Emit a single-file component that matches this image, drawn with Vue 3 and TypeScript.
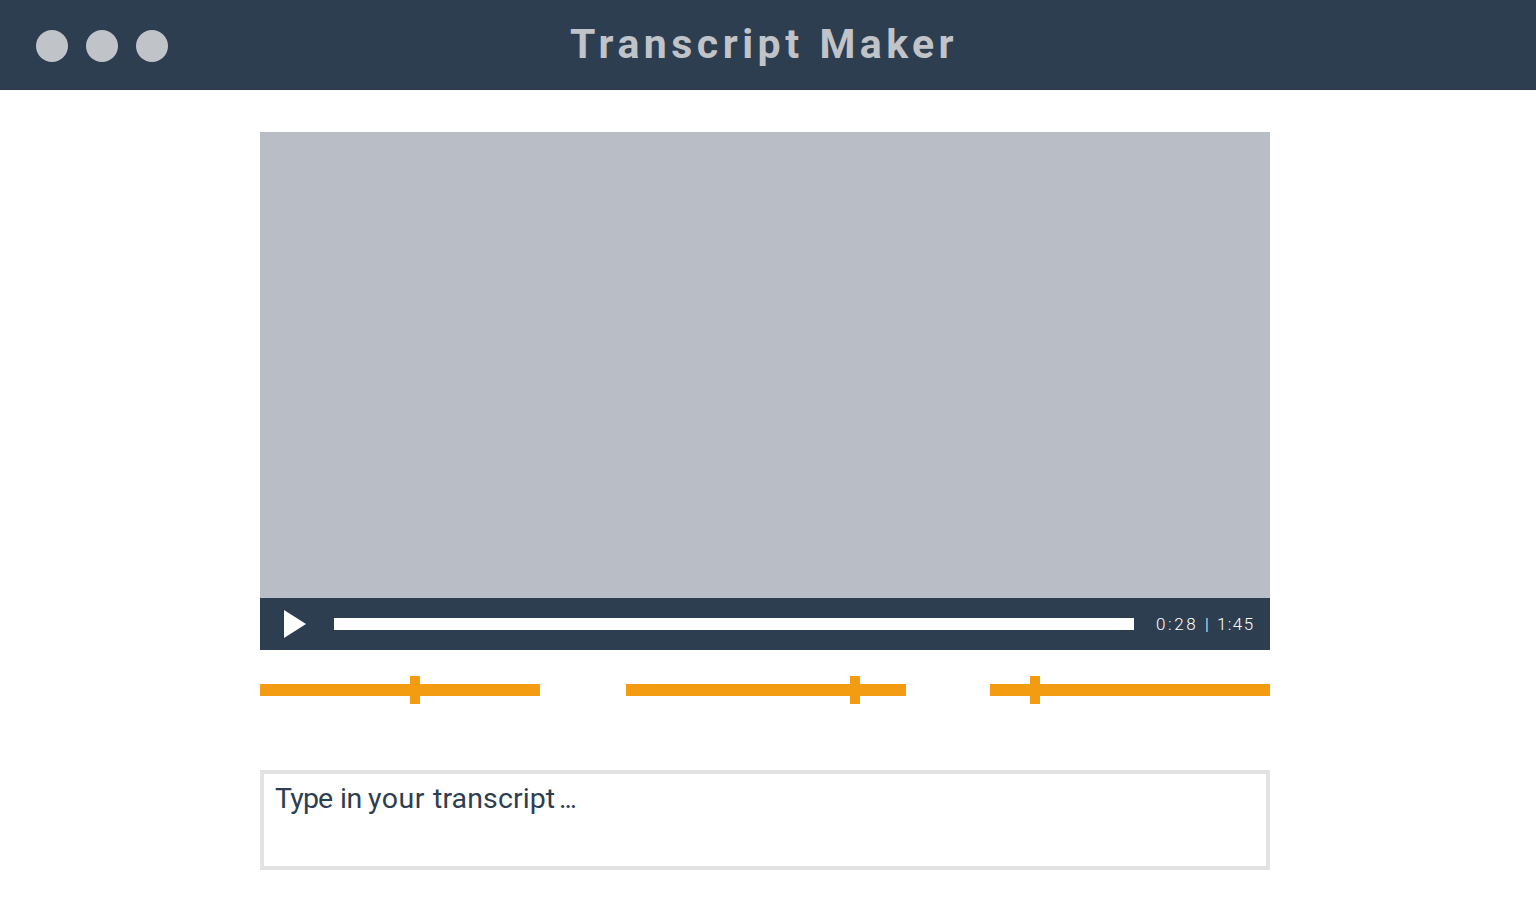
<script setup lang="ts">
import { ref } from 'vue'

interface Slider {
  id: string
  offset: number
}

const sliders: Slider[] = [
  { id: 'first', offset: 150 },
  { id: 'second', offset: 224 },
  { id: 'third', offset: 40 },
]
const words = ref(['Type', 'in', 'your', 'transcript', '...'])
</script>

<template>
  <div class="app">
    <header class="titlebar">
      <div class="dots">
        <span v-for="n in 3" :key="n" class="dot"></span>
      </div>
      <h1 class="title"><span class="lead">Transcript</span><span class="tail">Maker</span></h1>
      <div class="balance"></div>
    </header>
    <main class="content">
      <section class="player">
        <div class="video"></div>
        <div class="controls">
          <svg class="play" viewBox="0 0 22 28" width="22" height="28">
            <path d="M0 0L22 14L0 28Z" fill="#fff" />
          </svg>
          <div class="track"></div>
          <div class="time"><span class="elapsed">0:28</span><span class="bar">|</span><span class="total">1:45</span></div>
        </div>
      </section>
      <section class="sliders">
        <div v-for="s in sliders" :key="s.id" class="slider">
          <div class="thumb" :style="{ marginLeft: s.offset + 'px' }"></div>
        </div>
      </section>
      <div class="transcript">
        <span v-for="(w, i) in words" :key="w" :class="['word', 'word-' + i]">{{ w }}</span>
      </div>
    </main>
  </div>
</template>

<style>
body {
  margin: 0;
  background: #fff;
}
</style>

<style scoped>
.app {
  width: 1536px;
  height: 900px;
  overflow: hidden;
  background: #fff;
  font-family: Roboto, "Noto Sans", sans-serif;
}
.titlebar {
  display: grid;
  grid-template-columns: 570px 1fr 36px;
  height: 90px;
  box-sizing: border-box;
  border-bottom: 1px solid #2f3550;
  background: #2d3e50;
}
.dots {
  display: flex;
  gap: 18px;
  padding: 30px 0 0 36px;
}
.dot {
  width: 32px;
  height: 32px;
  border-radius: 50%;
  background: #c0c3c8;
}
.title {
  display: flex;
  margin: 0;
  padding-top: 20px;
  color: #c0c3c8;
  font-size: 41px;
  line-height: 48px;
  font-weight: 700;
  white-space: nowrap;
}
.lead {
  width: 249.5px;
  letter-spacing: 4.5px;
}
.tail {
  letter-spacing: 4.4px;
}
.content {
  width: 1010px;
  margin: 42px 0 0 260px;
}
.video {
  height: 466px;
  background: #b9bec6;
}
.controls {
  display: flex;
  align-items: center;
  height: 52px;
  box-sizing: border-box;
  padding-left: 24px;
  background: #2d3e50;
}
.track {
  width: 800px;
  height: 12px;
  margin-left: 28px;
  background: #fff;
}
.time {
  display: flex;
  margin-left: 22px;
  color: #fff;
  font-size: 17px;
  line-height: 20px;
  font-weight: 300;
  white-space: nowrap;
}
.elapsed {
  width: 41px;
  letter-spacing: 2.6px;
}
.bar {
  width: 20px;
  text-align: center;
}
.total {
  letter-spacing: 1.4px;
}
.sliders {
  display: grid;
  grid-template-columns: 280px 280px 280px;
  column-gap: 86px;
  margin-top: 26px;
}
.slider {
  display: flex;
  align-items: center;
  height: 28px;
  background: linear-gradient(#f39c12, #f39c12) 0 8px / 100% 12px no-repeat;
}
.slider:last-child {
  margin-left: -2px;
  margin-right: 2px;
}
.thumb {
  width: 10px;
  height: 28px;
  background: #f39c12;
}
.transcript {
  display: flex;
  height: 100px;
  margin-top: 66px;
  box-sizing: border-box;
  border: 4px solid #e2e2e2;
  padding: 8px 11px;
  color: #2d3e50;
  font-size: 28.5px;
  line-height: 34px;
  white-space: nowrap;
}
.word-0 {
  width: 65px;
  letter-spacing: -0.8px;
}
.word-1 {
  width: 28px;
  letter-spacing: -0.5px;
}
.word-2 {
  width: 65px;
  letter-spacing: 0.5px;
}
.word-3 {
  width: 126px;
  letter-spacing: 0.1px;
}
.word-4 {
  letter-spacing: -2.1px;
}
</style>
